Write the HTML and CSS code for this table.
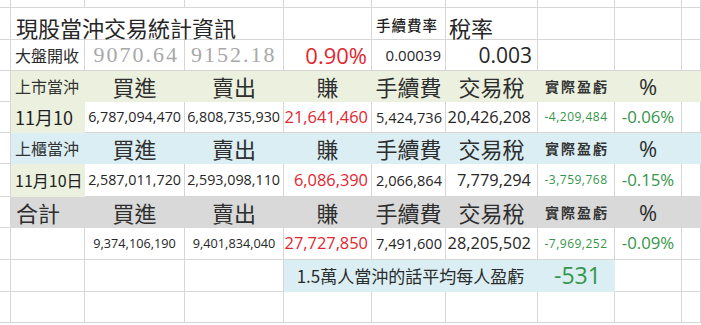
FILE: index.html
```html
<!DOCTYPE html>
<html lang="zh-Hant">
<head>
<meta charset="utf-8">
<title>現股當沖交易統計資訊</title>
<link rel="stylesheet" href="styles.css">
</head>
<body>
<div class="sheet">
  <!-- row 0 (partial) -->
  <div class="c"></div><div class="c"></div><div class="c"></div><div class="c"></div><div class="c"></div>
  <div class="c"></div><div class="c"></div><div class="c"></div><div class="c"></div><div class="c"></div>

  <!-- row 1 -->
  <div class="c"></div>
  <div class="c span3 l title">現股當沖交易統計資訊</div>
  <div class="c"></div>
  <div class="c l small-label">手續費率</div>
  <div class="c l title rate">稅率</div>
  <div class="c"></div><div class="c"></div><div class="c"></div>

  <!-- row 2 -->
  <div class="c"></div>
  <div class="c l label">大盤開收</div>
  <div class="c r idx pr5">9070.64</div>
  <div class="c l idx pl6">9152.18</div>
  <div class="c r num red big">0.90%</div>
  <div class="c r num fee pr4">0.00039</div>
  <div class="c r num tax pr5">0.003</div>
  <div class="c"></div><div class="c"></div><div class="c"></div>

  <!-- row 3 : 上市當沖 header -->
  <div class="c"></div>
  <div class="c g l label light">上市當沖</div>
  <div class="c g m head">買進</div>
  <div class="c g m head">賣出</div>
  <div class="c g m head">賺</div>
  <div class="c g m head">手續費</div>
  <div class="c g m head">交易稅</div>
  <div class="c g m pnl-label">實際盈虧</div>
  <div class="c g m head pct">%</div>
  <div class="c g"></div>

  <!-- row 4 -->
  <div class="c"></div>
  <div class="c g l date">11月10</div>
  <div class="c r num n14">6,787,094,470</div>
  <div class="c r num n14">6,808,735,930</div>
  <div class="c r num red n16">21,641,460</div>
  <div class="c r num n145">5,424,736</div>
  <div class="c r num n16 pr6">20,426,208</div>
  <div class="c m num green sm">-4,209,484</div>
  <div class="c m num green n165">-0.06%</div>
  <div class="c"></div>

  <!-- row 5 : 上櫃當沖 header -->
  <div class="c"></div>
  <div class="c b l label light">上櫃當沖</div>
  <div class="c b m head">買進</div>
  <div class="c b m head">賣出</div>
  <div class="c b m head">賺</div>
  <div class="c b m head">手續費</div>
  <div class="c b m head">交易稅</div>
  <div class="c b m pnl-label">實際盈虧</div>
  <div class="c b m head pct">%</div>
  <div class="c b"></div>

  <!-- row 6 -->
  <div class="c"></div>
  <div class="c g l date2">11月10日</div>
  <div class="c r num n14">2,587,011,720</div>
  <div class="c r num n14">2,593,098,110</div>
  <div class="c r num red n16">6,086,390</div>
  <div class="c r num n145">2,066,864</div>
  <div class="c r num n16 pr6">7,779,294</div>
  <div class="c m num green sm">-3,759,768</div>
  <div class="c m num green n165">-0.15%</div>
  <div class="c"></div>

  <!-- row 7 : 合計 header -->
  <div class="c"></div>
  <div class="c k l head total">合計</div>
  <div class="c k m head">買進</div>
  <div class="c k m head">賣出</div>
  <div class="c k m head">賺</div>
  <div class="c k m head">手續費</div>
  <div class="c k m head">交易稅</div>
  <div class="c k m pnl-label">實際盈虧</div>
  <div class="c k m head pct">%</div>
  <div class="c k"></div>

  <!-- row 8 -->
  <div class="c"></div>
  <div class="c"></div>
  <div class="c m num n13">9,374,106,190</div>
  <div class="c m num n13">9,401,834,040</div>
  <div class="c r num red n16">27,727,850</div>
  <div class="c r num n145">7,491,600</div>
  <div class="c r num n16 pr6">28,205,502</div>
  <div class="c m num green sm">-7,969,252</div>
  <div class="c m num green n165">-0.09%</div>
  <div class="c"></div>

  <!-- row 9 -->
  <div class="c"></div><div class="c"></div><div class="c"></div><div class="c"></div>
  <div class="c b span3 m avg">1.5萬人當沖的話平均每人盈虧</div>
  <div class="c b m num green result">-531</div>
  <div class="c"></div><div class="c"></div>

  <!-- row 10 -->
  <div class="c"></div><div class="c"></div><div class="c"></div><div class="c"></div><div class="c"></div>
  <div class="c"></div><div class="c"></div><div class="c"></div><div class="c"></div><div class="c"></div>
</div>
</body>
</html>
```

FILE: styles.css
```css
html, body {
  margin: 0;
  padding: 0;
  background: #ffffff;
}

body {
  width: 701px;
  height: 325px;
  overflow: hidden;
  font-family: "Noto Sans CJK TC", "Noto Sans", sans-serif;
  color: #2b2b2b;
}

.sheet {
  display: grid;
  grid-template-columns: 11px 74px 100px 99px 88px 74px 92px 77px 67px 1fr;
  grid-template-rows: 8px 32px 31px 31px 31px 31px 33px 31px 32px 32px 31px;
  width: 701px;
}

.c {
  box-sizing: border-box;
  border-right: 1px solid #d6d6d6;
  border-bottom: 1px solid #d6d6d6;
  display: flex;
  align-items: center;
  line-height: 1;
  white-space: nowrap;
  min-width: 0;
}

.span3 { grid-column: span 3; }

/* alignment */
.l { justify-content: flex-start; padding-left: 4px; }
.r { justify-content: flex-end; padding-right: 3px; }
.m { justify-content: center; }
.pr4 { padding-right: 4px; }
.pr5 { padding-right: 5px; }
.pr6 { padding-right: 6px; }
.pl6 { padding-left: 6px; }

/* fills */
.g { background: #ebf1de; border-color: #ebf1de; }
.b { background: #daeef3; border-color: #daeef3; }
.k { background: #d9d9d9; border-color: #d9d9d9; }

/* text styles */
.title {
  font-size: 22px;
  color: #262626;
  padding-top: 6px;
  padding-left: 5px;
}
.rate { padding-left: 3px; }

.small-label {
  font-size: 14.5px;
  letter-spacing: 1px;
  font-weight: 500;
  color: #222;
  padding-top: 4px;
}

.label {
  font-size: 16px;
  color: #2b2b2b;
}
.label.light { color: #333; }

.head {
  font-size: 22px;
  color: #2e2e2e;
}
.total { padding-left: 5px; }

.pct {
  font-family: "Open Sans", "Noto Sans", sans-serif;
  font-size: 22px;
}

.pnl-label {
  font-size: 14px;
  font-weight: 700;
  letter-spacing: 2px;
  color: #333;
  padding-left: 2px;
}

.date {
  font-size: 18px;
  color: #222;
  padding-left: 4px;
}
.date2 {
  font-size: 16px;
  color: #222;
  padding-left: 4px;
}

.idx {
  font-family: "Liberation Serif", serif;
  font-size: 22px;
  letter-spacing: 2px;
  color: #a8a8a8;
}

.num {
  font-family: "Open Sans", "Noto Sans", sans-serif;
  color: #262626;
}

.big { font-size: 22px; padding-right: 4px; }
.fee { font-size: 15px; }
.tax { font-size: 21px; }
.n13 { font-size: 12.7px; }
.n14 { font-size: 14.3px; }
.n145 { font-size: 14.6px; }
.n16 { font-size: 16.4px; }
.n165 { font-size: 16.8px; }
.sm { font-size: 12px; letter-spacing: 0.5px; }

.red { color: #e2262f; }
.green { color: #35964a; }

.avg {
  font-size: 17px;
  color: #2b2b2b;
}

.result {
  font-size: 23px;
  padding-left: 3px;
}
```
